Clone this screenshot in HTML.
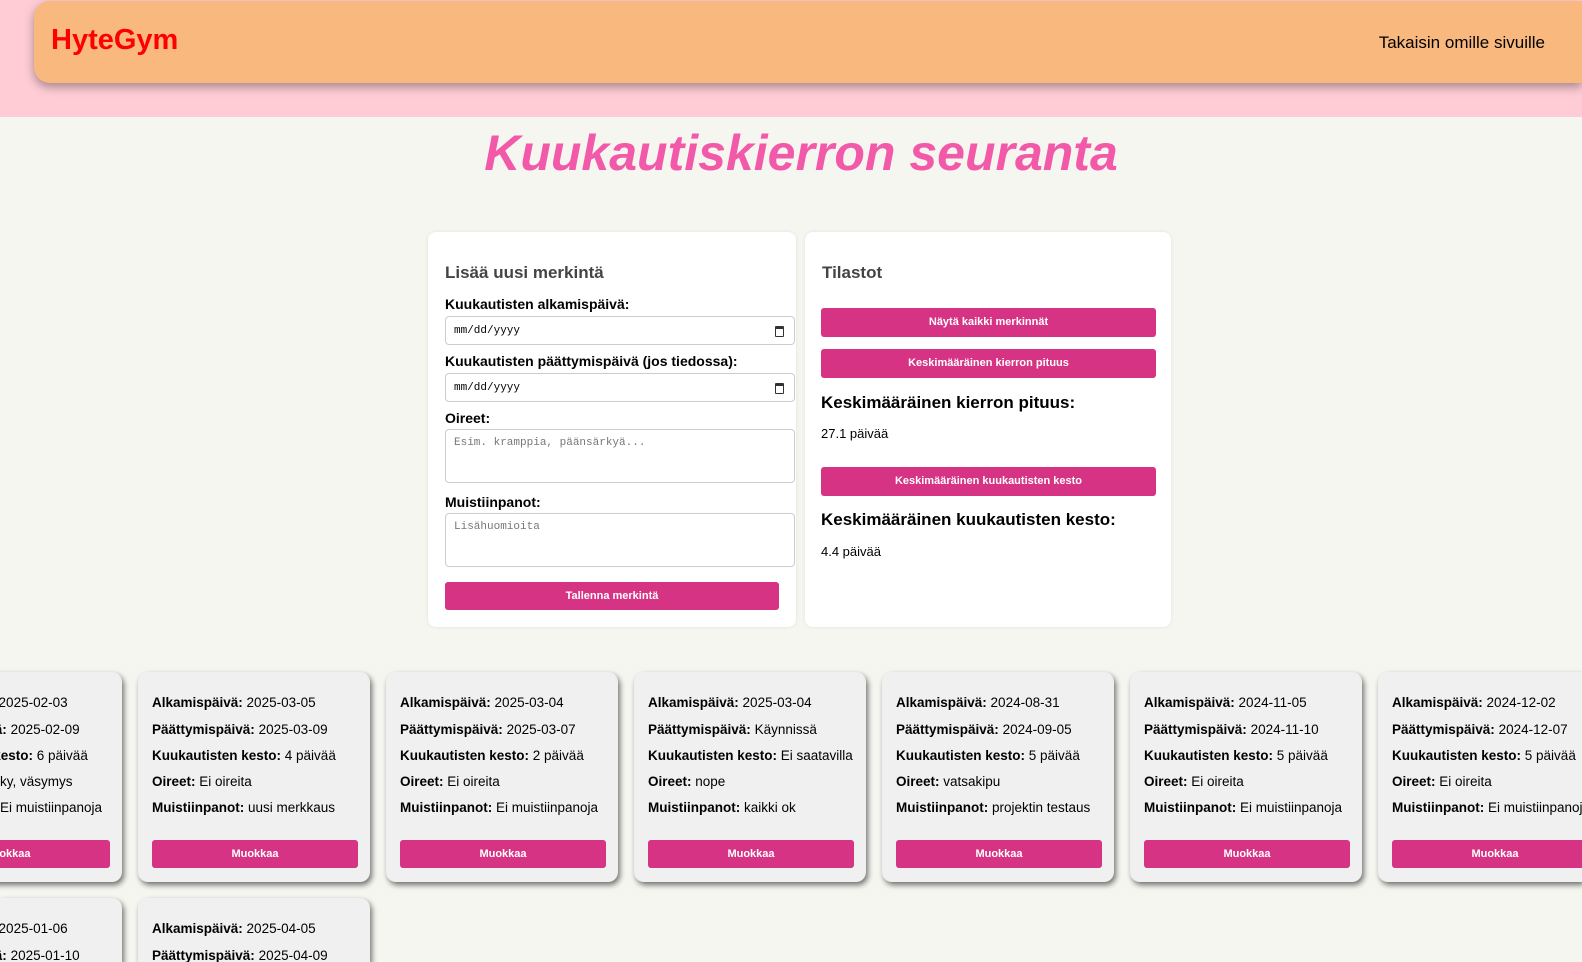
<!DOCTYPE html>
<html><head><meta charset="utf-8"><style>
*{box-sizing:border-box;margin:0;padding:0}
html,body{width:1582px;height:962px;overflow:hidden}
body{background:#f6f6f1;font-family:"Liberation Sans",Arial,sans-serif;color:#000}
#wrap{position:relative;width:1582px;height:962px;overflow:hidden}
.band{position:absolute;left:0;top:0;width:1582px;height:117px;background:#ffccd5}
.hdr{position:absolute;left:34px;top:1px;width:1548px;height:82px;background:#f9b87e;border-radius:16px 0 0 16px;box-shadow:0 4px 10px rgba(0,0,0,.35)}
.logo{position:absolute;left:51px;top:24px;font-size:29px;font-weight:bold;color:#ff0000}
.back{position:absolute;right:37px;top:33px;font-size:17px}
h1{position:absolute;left:0;width:1602px;top:124px;text-align:center;font-size:50px;font-style:italic;font-weight:bold;color:#f25aa9}
.panel{position:absolute;top:232px;height:395px;background:#fff;border-radius:8px;box-shadow:0 0 4px rgba(0,0,0,.08)}
.h3{position:absolute;font-size:17px;font-weight:bold;color:#444}
.lbl{position:absolute;left:17px;font-size:14px;font-weight:bold}
.inp{position:absolute;left:17px;width:350px;border:1px solid #ccc;border-radius:4px;font-family:"Liberation Mono",monospace;font-size:11px;padding:7px 8px;color:#777}
.date{height:29px;color:#000;padding-top:8px}
.date::after{content:"";position:absolute;right:10px;top:9px;width:7px;height:7px;border:1.5px solid #333;border-top-width:3px;border-radius:1px}
.btn{position:absolute;background:#d63384;color:#fff;font-size:11px;font-weight:bold;text-align:center;border-radius:3px}
.h4{position:absolute;left:16px;font-size:17px;font-weight:bold}
.val{position:absolute;left:16px;font-size:13px}
.card{position:absolute;width:232px;height:210px;background:#f0f0f0;border-radius:10px;box-shadow:2px 3px 6px rgba(0,0,0,.55)}
.card p{position:absolute;left:14px;font-size:13.5px;white-space:nowrap}
.card .btn{left:14px;top:168px;width:206px;height:28px;line-height:28px}
.card.short{height:64px;border-radius:10px 10px 0 0;overflow:hidden}
</style></head><body><div id="wrap">
<div class="band"></div>
<div class="hdr"></div>
<div class="logo">HyteGym</div>
<div class="back">Takaisin omille sivuille</div>
<h1>Kuukautiskierron seuranta</h1>

<div class="panel" style="left:428px;width:368px">
<div class="h3" style="left:17px;top:31px">Lisää uusi merkintä</div>
<div class="lbl" style="top:64px">Kuukautisten alkamispäivä:</div>
<div class="inp date" style="top:84px">mm/dd/yyyy</div>
<div class="lbl" style="top:121px">Kuukautisten päättymispäivä (jos tiedossa):</div>
<div class="inp date" style="top:141px">mm/dd/yyyy</div>
<div class="lbl" style="top:178px">Oireet:</div>
<div class="inp" style="top:197px;height:54px">Esim. kramppia, päänsärkyä...</div>
<div class="lbl" style="top:262px">Muistiinpanot:</div>
<div class="inp" style="top:281px;height:54px">Lisähuomioita</div>
<div class="btn" style="left:17px;top:350px;width:334px;height:28px;line-height:28px">Tallenna merkintä</div>
</div>

<div class="panel" style="left:805px;width:366px">
<div class="h3" style="left:17px;top:31px">Tilastot</div>
<div class="btn" style="left:16px;top:76px;width:335px;height:29px;line-height:29px">Näytä kaikki merkinnät</div>
<div class="btn" style="left:16px;top:117px;width:335px;height:29px;line-height:29px">Keskimääräinen kierron pituus</div>
<div class="h4" style="top:161px">Keskimääräinen kierron pituus:</div>
<div class="val" style="top:194px">27.1 päivää</div>
<div class="btn" style="left:16px;top:235px;width:335px;height:29px;line-height:29px">Keskimääräinen kuukautisten kesto</div>
<div class="h4" style="top:278px">Keskimääräinen kuukautisten kesto:</div>
<div class="val" style="top:312px">4.4 päivää</div>
</div>

<div class="card" style="left:-110px;top:672px">
<p style="top:23px"><b>Alkamispäivä:</b> 2025-02-03</p>
<p style="top:50px"><b>Päättymispäivä:</b> 2025-02-09</p>
<p style="top:76px"><b>Kuukautisten kesto:</b> 6 päivää</p>
<p style="top:102px"><b>Oireet:</b> päänsärky, väsymys</p>
<p style="top:128px"><b>Muistiinpanot:</b> Ei muistiinpanoja</p>
<div class="btn">Muokkaa</div></div>

<div class="card" style="left:138px;top:672px">
<p style="top:23px"><b>Alkamispäivä:</b> 2025-03-05</p>
<p style="top:50px"><b>Päättymispäivä:</b> 2025-03-09</p>
<p style="top:76px"><b>Kuukautisten kesto:</b> 4 päivää</p>
<p style="top:102px"><b>Oireet:</b> Ei oireita</p>
<p style="top:128px"><b>Muistiinpanot:</b> uusi merkkaus</p>
<div class="btn">Muokkaa</div></div>

<div class="card" style="left:386px;top:672px">
<p style="top:23px"><b>Alkamispäivä:</b> 2025-03-04</p>
<p style="top:50px"><b>Päättymispäivä:</b> 2025-03-07</p>
<p style="top:76px"><b>Kuukautisten kesto:</b> 2 päivää</p>
<p style="top:102px"><b>Oireet:</b> Ei oireita</p>
<p style="top:128px"><b>Muistiinpanot:</b> Ei muistiinpanoja</p>
<div class="btn">Muokkaa</div></div>

<div class="card" style="left:634px;top:672px">
<p style="top:23px"><b>Alkamispäivä:</b> 2025-03-04</p>
<p style="top:50px"><b>Päättymispäivä:</b> Käynnissä</p>
<p style="top:76px"><b>Kuukautisten kesto:</b> Ei saatavilla</p>
<p style="top:102px"><b>Oireet:</b> nope</p>
<p style="top:128px"><b>Muistiinpanot:</b> kaikki ok</p>
<div class="btn">Muokkaa</div></div>

<div class="card" style="left:882px;top:672px">
<p style="top:23px"><b>Alkamispäivä:</b> 2024-08-31</p>
<p style="top:50px"><b>Päättymispäivä:</b> 2024-09-05</p>
<p style="top:76px"><b>Kuukautisten kesto:</b> 5 päivää</p>
<p style="top:102px"><b>Oireet:</b> vatsakipu</p>
<p style="top:128px"><b>Muistiinpanot:</b> projektin testaus</p>
<div class="btn">Muokkaa</div></div>

<div class="card" style="left:1130px;top:672px">
<p style="top:23px"><b>Alkamispäivä:</b> 2024-11-05</p>
<p style="top:50px"><b>Päättymispäivä:</b> 2024-11-10</p>
<p style="top:76px"><b>Kuukautisten kesto:</b> 5 päivää</p>
<p style="top:102px"><b>Oireet:</b> Ei oireita</p>
<p style="top:128px"><b>Muistiinpanot:</b> Ei muistiinpanoja</p>
<div class="btn">Muokkaa</div></div>

<div class="card" style="left:1378px;top:672px;width:204px;border-radius:10px 0 0 10px;overflow:hidden">
<p style="top:23px"><b>Alkamispäivä:</b> 2024-12-02</p>
<p style="top:50px"><b>Päättymispäivä:</b> 2024-12-07</p>
<p style="top:76px"><b>Kuukautisten kesto:</b> 5 päivää</p>
<p style="top:102px"><b>Oireet:</b> Ei oireita</p>
<p style="top:128px"><b>Muistiinpanot:</b> Ei muistiinpanoja</p>
<div class="btn">Muokkaa</div></div>

<div class="card short" style="left:0;width:122px;top:898px;border-radius:0 10px 0 0">
<p style="top:23px;left:-96px"><b>Alkamispäivä:</b> 2025-01-06</p>
<p style="top:50px;left:-96px"><b>Päättymispäivä:</b> 2025-01-10</p></div>

<div class="card short" style="left:138px;top:898px">
<p style="top:23px"><b>Alkamispäivä:</b> 2025-04-05</p>
<p style="top:50px"><b>Päättymispäivä:</b> 2025-04-09</p></div>
</div></body></html>
